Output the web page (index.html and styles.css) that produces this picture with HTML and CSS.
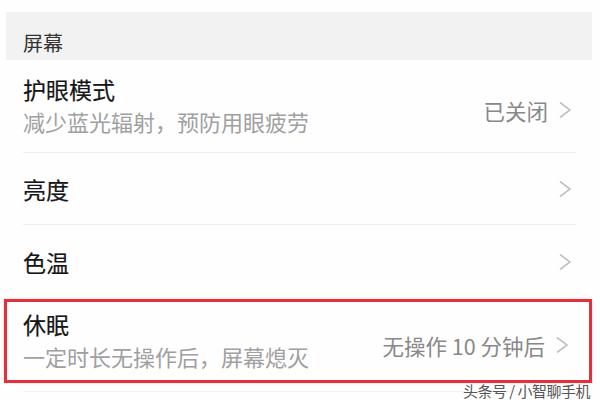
FILE: index.html
```html
<!DOCTYPE html>
<html lang="zh">
<head>
<meta charset="utf-8">
<link rel="stylesheet" href="styles.css">
</head>
<body>
<div class="screen">
  <div class="section-head">屏幕</div>
  <div class="row row-tall">
    <div class="text">
      <div class="title">护眼模式</div>
      <div class="sub">减少蓝光辐射，预防用眼疲劳</div>
    </div>
    <div class="value">已关闭</div>
    <svg class="chev" viewBox="0 0 14 18" width="14" height="18"><path d="M2 1.5 L12 9 L2 16.5" fill="none" stroke="#c2c2c2" stroke-width="1.6"/></svg>
  </div>
  <div class="row row-short">
    <div class="text"><div class="title">亮度</div></div>
    <svg class="chev" viewBox="0 0 14 18" width="14" height="18"><path d="M2 1.5 L12 9 L2 16.5" fill="none" stroke="#c2c2c2" stroke-width="1.6"/></svg>
  </div>
  <div class="row row-short last">
    <div class="text"><div class="title">色温</div></div>
    <svg class="chev" viewBox="0 0 14 18" width="14" height="18"><path d="M2 1.5 L12 9 L2 16.5" fill="none" stroke="#c2c2c2" stroke-width="1.6"/></svg>
  </div>
  <div class="row row-boxed">
    <div class="text">
      <div class="title">休眠</div>
      <div class="sub">一定时长无操作后，屏幕熄灭</div>
    </div>
    <div class="value">无操作 10 分钟后</div>
    <svg class="chev" viewBox="0 0 14 18" width="14" height="18"><path d="M2 1.5 L12 9 L2 16.5" fill="none" stroke="#c2c2c2" stroke-width="1.6"/></svg>
  </div>
  <div class="tail"></div>
  <div class="watermark">头条号 / 小智聊手机</div>
</div>
</body>
</html>
```
FILE: styles.css
```css
html, body {
  margin: 0;
  padding: 0;
  background: #fefefe;
}
.screen {
  position: relative;
  width: 600px;
  height: 400px;
  overflow: hidden;
  font-family: "Noto Sans CJK SC", "Noto Sans", sans-serif;
  padding-top: 12px;
  box-sizing: border-box;
}
.section-head {
  margin: 0 8px 0 6px;
  height: 48px;
  background: #f2f2f2;
  padding-left: 17px;
  box-sizing: border-box;
  font-size: 20px;
  line-height: 20px;
  padding-top: 21px;
  color: #333;
}
.row {
  display: flex;
  align-items: center;
  margin: 0 24px 0 23px;
  padding-right: 4px;
  border-bottom: 1.5px solid #efefef;
  box-sizing: border-box;
}
.row-tall { height: 93px; }
.row-short { height: 72px; }
.row.last { border-bottom: none; height: 74px; }
.text { flex: 1; }
.title {
  font-size: 23px;
  line-height: 30px;
  color: #161616;
  -webkit-text-stroke: 0.2px #161616;
}
.sub {
  font-size: 22px;
  line-height: 30px;
  color: #a0a0a0;
  margin-top: 2px;
}
.row-tall .text { margin-top: -3px; }
.value {
  font-size: 21.5px;
  color: #888;
  margin-right: 10px;
  margin-top: 8px;
}
.chev { flex: none; }
.row-tall .chev { margin-top: 8px; }
.row-boxed .chev { margin-top: 8px; }
.row-boxed {
  margin: 0 8px 0 4px;
  height: 84px;
  border: 3px solid #e0313c;
  padding: 0 20px 0 16px;
  box-shadow: 0 0 2px rgba(230, 80, 90, 0.35);
}
.row-boxed .text { margin-top: -2px; }
.tail {
  margin: 8px 24px 0 23px;
  border-top: 1px solid #f3f3f3;
}
.watermark {
  position: absolute;
  right: 10px;
  bottom: 0;
  font-size: 15px;
  line-height: 18px;
  color: #555;
  text-shadow: 0 0 2px #fff, 0 0 2px #fff;
  letter-spacing: -0.5px;
}
```
